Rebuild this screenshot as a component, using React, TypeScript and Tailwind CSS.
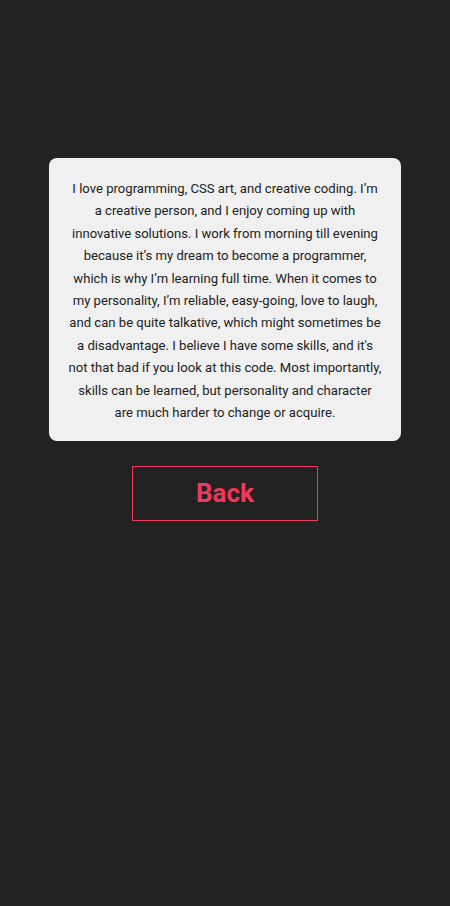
export default function App() {
  return (
    <div className="min-h-screen w-full bg-[#222222] pt-[158px] flex flex-col items-center font-['Roboto',sans-serif]">
      {/* About card */}
      <div className="w-[352px] rounded-lg bg-[#f0f0f0] px-[19px] pt-5 pb-[17px]">
        <p className="text-center text-[13.1px] leading-[22.4px] text-[#222222]">
          I love programming, CSS art, and creative coding. I’m a creative person, and I enjoy
          coming up with innovative solutions. I work from morning till evening because it’s my
          dream to become a programmer, which is why I’m learning full time. When it comes to my
          personality, I’m reliable, easy-going, love to laugh, and can be quite talkative, which
          might sometimes be a disadvantage. I believe I have some skills, and it's not that bad
          if you look at this code. Most importantly, skills can be learned, but personality and
          character are much harder to change or acquire.
        </p>
      </div>

      <button className="mt-[25px] w-[186px] h-[55px] border border-solid border-[#f2385a] bg-transparent text-[#f2385a] text-[26px] font-bold">
        Back
      </button>
    </div>
  );
}
